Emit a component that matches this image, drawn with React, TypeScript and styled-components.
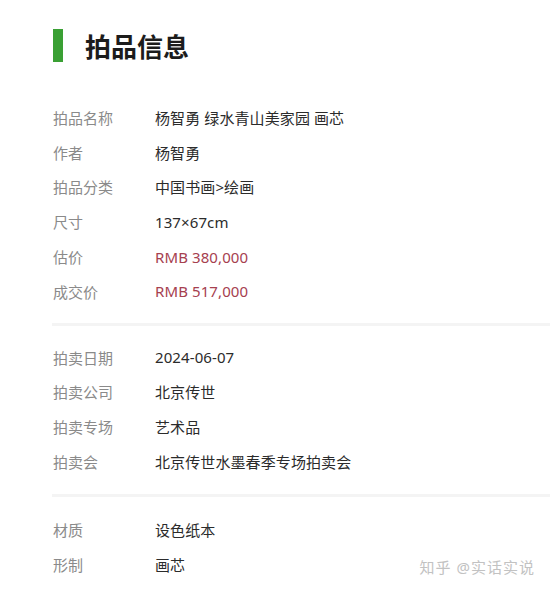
import styled, { createGlobalStyle } from 'styled-components';

interface IInfoRow {
  label: string;
  value: string;
  price?: boolean;
}

const GlobalStyle = createGlobalStyle`
  html, body {
    margin: 0;
    padding: 0;
    background: #ffffff;
  }
  body {
    font-family: "Noto Sans", "Noto Sans CJK SC", sans-serif;
  }
`;

const Page = styled.div`
  position: relative;
  width: 550px;
  height: 594px;
  overflow: hidden;
  background: #ffffff;
  padding-top: 29px;
  box-sizing: border-box;
`;

const Header = styled.div`
  display: flex;
  align-items: center;
  gap: 22px;
  padding-left: 53px;
  height: 33px;
  margin-bottom: 38px;
`;

const GreenBar = styled.div`
  width: 10px;
  height: 33px;
  background: #3aa034;
`;

const Title = styled.h1`
  margin: 0;
  font-family: "Noto Sans CJK SC", sans-serif;
  font-size: 26px;
  font-weight: 700;
  color: #1c1c1c;
  line-height: 1;
`;

const Section = styled.div`
  display: flex;
  flex-direction: column;
  padding-left: 53px;
`;

const Divider = styled.div<{ $top: number; $bottom: number }>`
  height: 3px;
  margin: ${(p) => p.$top}px 0 ${(p) => p.$bottom}px 52px;
  background: #f4f4f4;
`;

const Row = styled.div`
  display: flex;
  align-items: center;
  height: 34.8px;
  font-size: 15px;
`;

const Label = styled.span`
  width: 102px;
  flex-shrink: 0;
  color: #8a8a8a;
`;

const Value = styled.span<{ $price?: boolean }>`
  color: ${(p) => (p.$price ? '#a6404f' : '#2b2b2b')};
  letter-spacing: 0.1px;
`;

const Watermark = styled.div`
  position: absolute;
  right: 15px;
  bottom: 17px;
  font-size: 15px;
  color: #c2c2c2;
  letter-spacing: 1px;
`;

const InfoRow = ({ label, value, price }: IInfoRow) => (
  <Row>
    <Label>{label}</Label>
    <Value $price={price}>{value}</Value>
  </Row>
);

const lotRows: IInfoRow[] = [
  { label: '拍品名称', value: '杨智勇 绿水青山美家园 画芯' },
  { label: '作者', value: '杨智勇' },
  { label: '拍品分类', value: '中国书画>绘画' },
  { label: '尺寸', value: '137×67cm' },
  { label: '估价', value: 'RMB 380,000', price: true },
  { label: '成交价', value: 'RMB 517,000', price: true },
];

const auctionRows: IInfoRow[] = [
  { label: '拍卖日期', value: '2024-06-07' },
  { label: '拍卖公司', value: '北京传世' },
  { label: '拍卖专场', value: '艺术品' },
  { label: '拍卖会', value: '北京传世水墨春季专场拍卖会' },
];

const materialRows: IInfoRow[] = [
  { label: '材质', value: '设色纸本' },
  { label: '形制', value: '画芯' },
];

const App = () => {
  return (
    <>
      <GlobalStyle />
      <Page>
        <Header>
          <GreenBar />
          <Title>拍品信息</Title>
        </Header>
        <Section>
          {lotRows.map((r) => (
            <InfoRow key={r.label} {...r} />
          ))}
        </Section>
        <Divider $top={14} $bottom={14} />
        <Section>
          {auctionRows.map((r) => (
            <InfoRow key={r.label} {...r} />
          ))}
        </Section>
        <Divider $top={15} $bottom={15} />
        <Section>
          {materialRows.map((r) => (
            <InfoRow key={r.label} {...r} />
          ))}
        </Section>
        <Watermark>知乎 @实话实说</Watermark>
      </Page>
    </>
  );
};

export default App;
